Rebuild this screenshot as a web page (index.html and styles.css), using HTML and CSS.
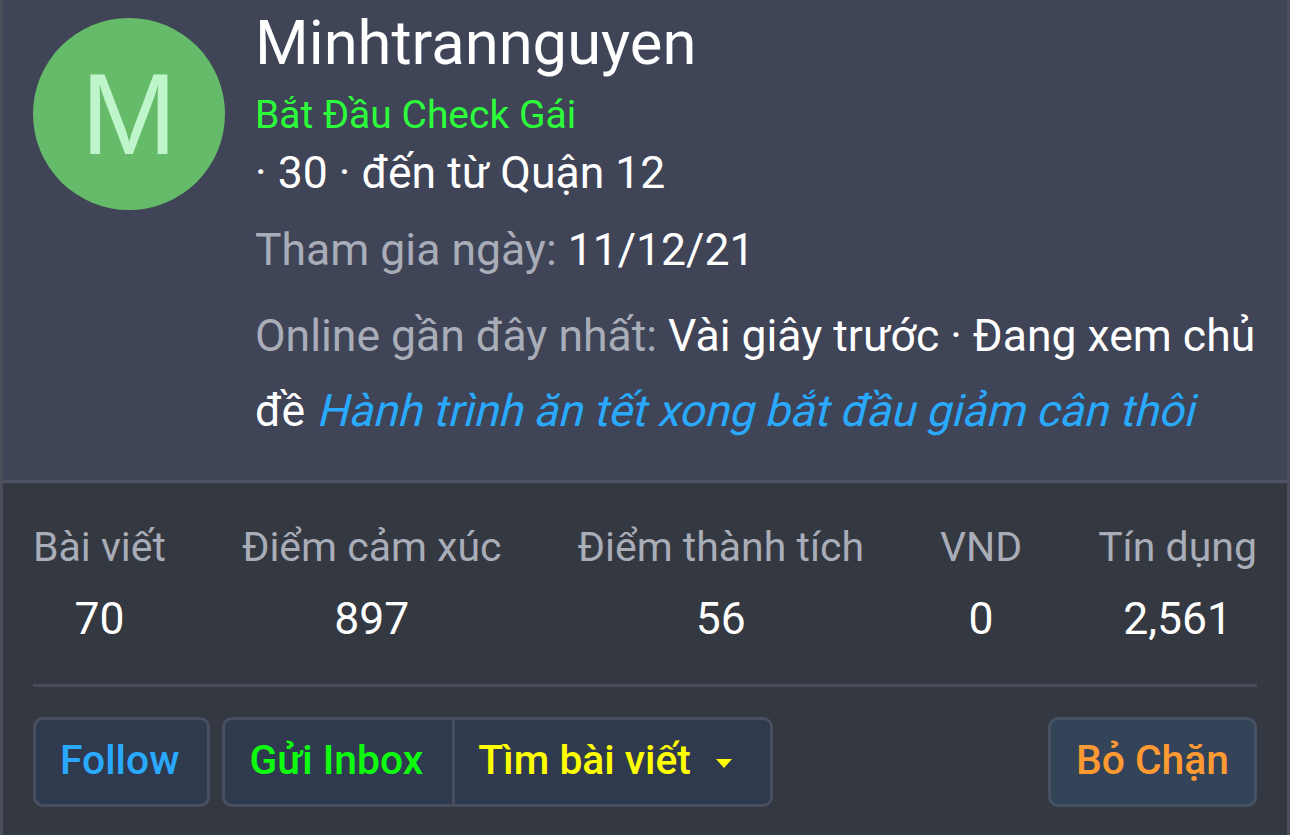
FILE: index.html
```html
<!DOCTYPE html>
<html lang="vi">
<head>
  <meta charset="UTF-8">
  <meta name="viewport" content="width=device-width, initial-scale=1.0">
  <title>Minhtrannguyen</title>
  <link rel="stylesheet" href="styles.css">
</head>
<body>

<div class="member-card">
  <header class="member-header">
    <div class="avatar">M</div>
    <div class="member-info">
      <h1 class="username">Minhtrannguyen</h1>
      <div class="user-title">Bắt Đầu Check Gái</div>
      <div class="user-blurb">· 30 · đến từ Quận 12</div>
      <div class="meta-row joined"><span class="muted">Tham gia ngày:</span> 11/12/21</div>
      <div class="meta-row online"><span class="muted">Online gần đây nhất:</span> Vài giây trước · Đang xem chủ đề <a class="thread-link" href="#">Hành trình ăn tết xong bắt đầu giảm cân thôi</a></div>
    </div>
  </header>

  <section class="member-body">
    <dl class="stats">
      <div class="stat"><dt>Bài viết</dt><dd>70</dd></div>
      <div class="stat"><dt>Điểm cảm xúc</dt><dd>897</dd></div>
      <div class="stat"><dt>Điểm thành tích</dt><dd>56</dd></div>
      <div class="stat"><dt>VND</dt><dd>0</dd></div>
      <div class="stat"><dt>Tín dụng</dt><dd>2,561</dd></div>
    </dl>

    <div class="actions">
      <a class="btn btn-follow" href="#">Follow</a>
      <div class="btn-group">
        <a class="btn btn-inbox" href="#">Gửi Inbox</a>
        <a class="btn btn-search" href="#">Tìm bài viết <span class="caret"></span></a>
      </div>
      <a class="btn btn-unblock" href="#">Bỏ Chặn</a>
    </div>
  </section>
</div>

</body>
</html>
```

FILE: styles.css
```css
body {
  font-family: Roboto, "Noto Sans", sans-serif;
  margin: 0;
  background-color: #343841;
  color: #fff;
  overflow: hidden;
}
.member-card {
  height: 835px;
  box-sizing: border-box;
  border-left: 3px solid #4a4e5a;
  border-right: 3px solid #4a4e5a;
  background-color: #343841;
}
.member-header {
  display: flex;
  height: 480px;
  padding-left: 30px;
  background-color: #3f4457;
  border-bottom: 3px solid #4e5364;
}
.avatar {
  flex: none;
  width: 192px;
  height: 192px;
  margin-top: 18px;
  border-radius: 50%;
  background-color: #66bb6a;
  color: #bff5cb;
  font-family: "Liberation Sans", sans-serif;
  font-size: 115px;
  line-height: 192px;
  text-align: center;
}
.member-info {
  margin-left: 30px;
  width: 1003px;
}
.username {
  margin: 0;
  font-size: 61.5px;
  font-weight: 400;
  line-height: 86px;
}
.user-title {
  color: #2cff3a;
  font-size: 39px;
  line-height: 58px;
}
.user-blurb {
  font-size: 44.5px;
  line-height: 58px;
}
.meta-row {
  font-size: 44.5px;
  line-height: 75px;
}
.joined {
  margin-top: 11px;
}
.online {
  margin-top: 11px;
}
.muted {
  color: #a9adb8;
}
/* regular face leaned over, the italic face of Roboto is too narrow here */
.thread-link {
  display: inline-block;
  color: #29aaff;
  text-decoration: none;
  transform: skewX(-14deg);
  transform-origin: 0 53px;
}
.member-body {
  padding: 0 30px;
}
.stats {
  display: flex;
  justify-content: space-between;
  margin: 0;
  padding: 36px 0 37px;
  border-bottom: 3px solid #484c58;
}
.stat {
  text-align: center;
}
.stat dt {
  color: #a9adb8;
  font-size: 41px;
  line-height: 56px;
}
.stat dd {
  margin: 16px 0 0;
  font-size: 44.5px;
  line-height: 56px;
}
.actions {
  display: flex;
  gap: 12px;
  margin-top: 30px;
}
.btn {
  display: block;
  box-sizing: border-box;
  height: 90px;
  padding: 0 24px;
  border: 3px solid #484f60;
  border-radius: 10px;
  background-color: #303a4f;
  font-size: 40.8px;
  font-weight: 500;
  line-height: 80px;
  text-decoration: none;
}
.btn-group {
  display: flex;
}
.btn-follow {
  color: #29aaff;
  padding-right: 28px;
}
.btn-inbox {
  color: #0eff0e;
  padding-right: 29px;
  border-radius: 10px 0 0 10px;
}
.btn-search {
  color: #ffff00;
  margin-left: -3px;
  padding-left: 23px;
  padding-right: 38px;
  border-radius: 0 10px 10px 0;
}
.caret {
  display: inline-block;
  margin-left: 15px;
  vertical-align: middle;
  border-top: 9px solid #ffff00;
  border-left: 8.5px solid transparent;
  border-right: 8.5px solid transparent;
}
.btn-unblock {
  margin-left: auto;
  padding: 0 25px;
  color: #ff9a33;
  background-color: #344458;
  border-color: #465264;
}
```
